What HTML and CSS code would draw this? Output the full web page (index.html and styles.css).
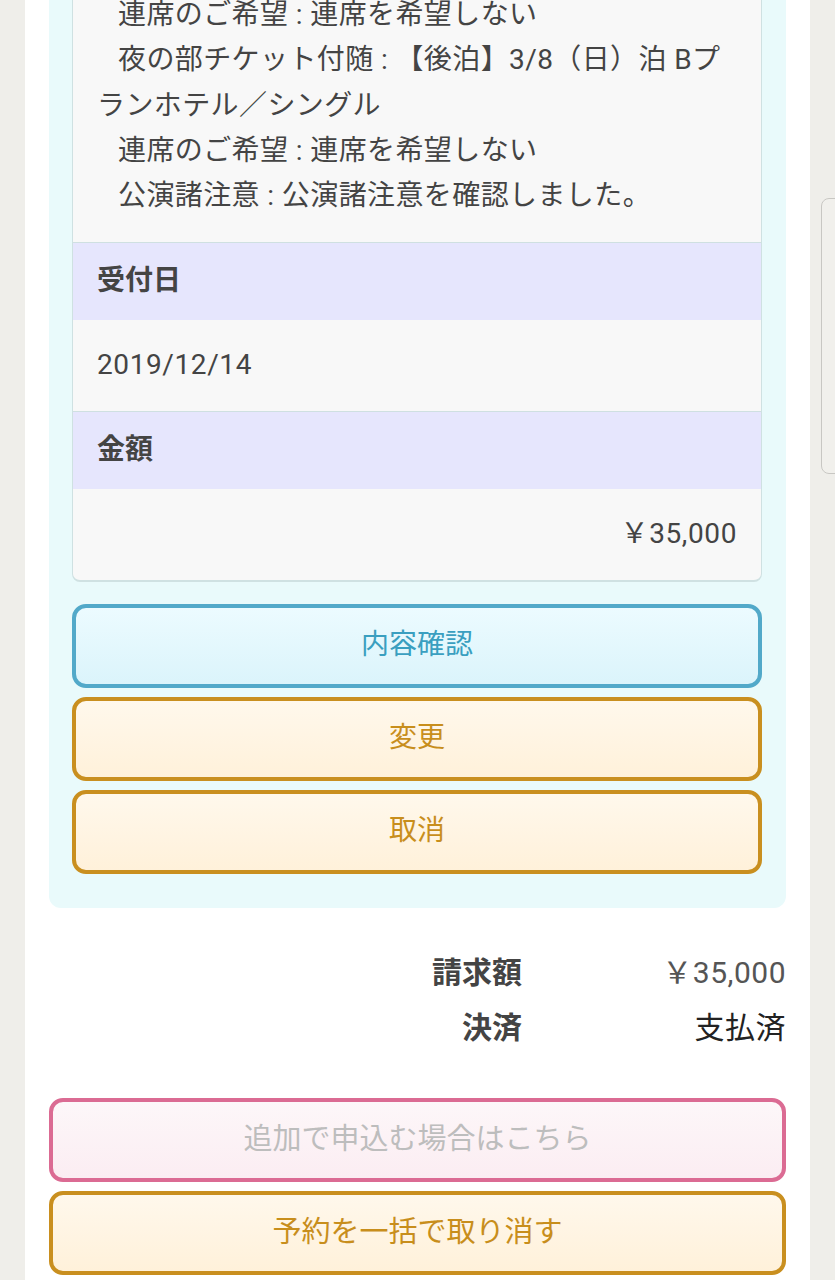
FILE: index.html
```html
<!doctype html>
<html lang="ja">
	<head>
		<meta charset="UTF-8" />
		<meta name="viewport" content="width=device-width, initial-scale=1.0" />
		<title>予約内容</title>
		<link rel="stylesheet" href="styles.css">
	</head>
	<body>
		<div class="sheet">
			<div class="order">
				<div class="detail">
					<div class="notes">
						<p>連席のご希望 : 連席を希望しない</p>
						<p>夜の部チケット付随 : 【後泊】3/8（日）泊 Bプランホテル／シングル</p>
						<p>連席のご希望 : 連席を希望しない</p>
						<p>公演諸注意 : 公演諸注意を確認しました。</p>
					</div>
					<div class="label">受付日</div>
					<div class="value">2019/12/14</div>
					<div class="label">金額</div>
					<div class="value price">￥35,000</div>
				</div>

				<button class="btn blue">内容確認</button>
				<button class="btn gold">変更</button>
				<button class="btn gold">取消</button>
			</div>

			<div class="summary">
				<div class="sum-label">請求額</div>
				<div class="sum-value">￥35,000</div>
				<div class="sum-label">決済</div>
				<div class="sum-value paid">支払済</div>
			</div>

			<button class="btn pink wide" disabled>追加で申込む場合はこちら</button>
			<button class="btn gold wide">予約を一括で取り消す</button>
		</div>

		<!-- browser fast-scroll handle -->
		<div class="scroll-handle"></div>
	</body>
</html>
```

FILE: styles.css
```css
body {
	margin: 0;
	background: #efeeea;
	font-family: Roboto, "Noto Sans CJK JP", sans-serif;
	font-size: 28px;
	line-height: 1.6;
	color: #444;
	overflow: hidden;
}
.sheet {
	margin: -57px 25px 0;
	padding: 0 24px 40px;
	background: #fff;
}
.order {
	background: #e9fafb;
	border-radius: 0 0 12px 12px;
	padding: 24px 24px 34px 23px;
}
.detail {
	background: #f8f8f8;
	border: 1px solid #cfe1e2;
	border-bottom-width: 2px;
	border-radius: 8px;
	overflow: hidden;
}
.notes {
	padding: 24px;
	line-height: 45.3px;
	letter-spacing: 0.4px;
}
.notes p {
	margin: 0;
	text-indent: 21px;
}
.label {
	border-top: 1px solid #cfe0e1;
	background: #e6e6fd;
	padding: 16px 24px;
	font-weight: bold;
}
.value {
	padding: 23px 24px;
	letter-spacing: 0.6px;
}
.price {
	text-align: right;
}
.btn {
	display: block;
	box-sizing: border-box;
	width: 100%;
	height: 84px;
	margin-top: 9px;
	border: 4px solid;
	border-radius: 14px;
	font: inherit;
	text-align: center;
	cursor: pointer;
}
.detail + .btn {
	margin-top: 22px;
}
.wide {
	font-size: 29px;
}
.blue {
	border-color: #52a9c9;
	background: linear-gradient(#ecfbff, #dbf4fb);
	color: #3a9fc0;
}
.gold {
	border-color: #c98f1f;
	background: linear-gradient(#fff8ec, #fff1da);
	color: #c88e1c;
}
.pink {
	border-color: #db6b93;
	background: linear-gradient(#fdf7f9, #fbedf2);
	color: #bdbdbd;
	cursor: default;
}
.summary {
	display: grid;
	grid-template-columns: 1fr 264px;
	font-size: 30px;
	line-height: 55px;
	margin: 37px 0 43px;
}
.sum-label {
	text-align: right;
	font-weight: bold;
}
.sum-value {
	text-align: right;
	color: #555;
	letter-spacing: 0.5px;
}
.paid {
	color: #222;
}
.scroll-handle {
	position: fixed;
	top: 198px;
	right: -12px;
	width: 24px;
	height: 274px;
	border: 1px solid #c8c7c3;
	border-radius: 8px;
	background: #f1f0ec;
}
```
